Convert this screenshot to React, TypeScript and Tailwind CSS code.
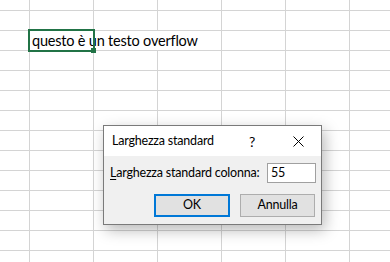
import React from "react";

const COLS = 7;
const ROWS = 14;

export default function App() {
  const cells: React.ReactNode[] = [];
  for (let r = 0; r < ROWS; r++) {
    if (r === 2) {
      cells.push(<div key={`${r}-0`} className="border-r border-b border-[#d4d4d4]" />);
      cells.push(
        <div
          key={`${r}-1`}
          className="col-span-3 border-r border-b border-[#d4d4d4] relative overflow-visible"
        >
          <span className="absolute left-[2px] bottom-[0px] whitespace-nowrap text-[14.5px] tracking-[-0.2px] leading-[19px] text-black [font-family:Lato,sans-serif]">
            questo è un testo overflow
          </span>
        </div>
      );
      for (let c = 4; c < COLS; c++) {
        cells.push(<div key={`${r}-${c}`} className="border-r border-b border-[#d4d4d4]" />);
      }
    } else {
      for (let c = 0; c < COLS; c++) {
        cells.push(<div key={`${r}-${c}`} className="border-r border-b border-[#d4d4d4]" />);
      }
    }
  }

  return (
    <div className="relative w-[390px] h-[262px] bg-white overflow-hidden [font-family:Lato,sans-serif]">
      <div className="grid grid-cols-[30px_repeat(6,64px)] grid-rows-[11px_repeat(13,20px)] w-[414px]">
        {cells}
      </div>

      {/* selection */}
      <div className="absolute left-[28px] top-[29px] w-[67px] h-[23px] border-2 border-[#217346]" />
      <div className="absolute left-[91px] top-[48px] w-[5px] h-[5px] bg-[#217346]" />

      {/* dialog */}
      <div className="absolute left-[103px] top-[125px] w-[219px] h-[100px] border border-[#7a7a7a] bg-[#f0f0f0] shadow-[3px_5px_14px_rgba(0,0,0,0.28)] flex flex-col text-[12.5px] tracking-[-0.2px] text-black [font-family:Lato,sans-serif]">
        <div className="h-[30px] bg-white flex items-center">
          <span className="pl-[8px] flex-1 whitespace-nowrap">Larghezza standard</span>
          <div className="w-[46px] h-full flex items-center justify-center text-[14px]">?</div>
          <div className="w-[46px] h-full flex items-center justify-center">
            <svg width="11" height="11" viewBox="0 0 11 11">
              <path d="M0.5 0.5 L10.5 10.5 M10.5 0.5 L0.5 10.5" stroke="#000" strokeWidth="1" />
            </svg>
          </div>
        </div>
        <div className="flex-1 flex flex-col pl-[6px] pr-[5px] pt-[7px]">
          <div className="flex items-center justify-between h-[20px]">
            <span className="whitespace-nowrap">
              <span className="underline underline-offset-2">L</span>arghezza standard colonna:
            </span>
            <div className="w-[49px] h-[20px] bg-white border border-[#a0a0a0] flex items-center pl-[3px]">
              55
            </div>
          </div>
          <div className="flex justify-end gap-[10px] mt-[11px] pr-[1px]">
            <button className="w-[76px] h-[23px] bg-[#e1e1e1] border-2 border-[#0078d7] flex items-center justify-center">
              OK
            </button>
            <button className="w-[75px] h-[23px] bg-[#e1e1e1] border border-[#adadad] flex items-center justify-center">
              Annulla
            </button>
          </div>
        </div>
      </div>
    </div>
  );
}
